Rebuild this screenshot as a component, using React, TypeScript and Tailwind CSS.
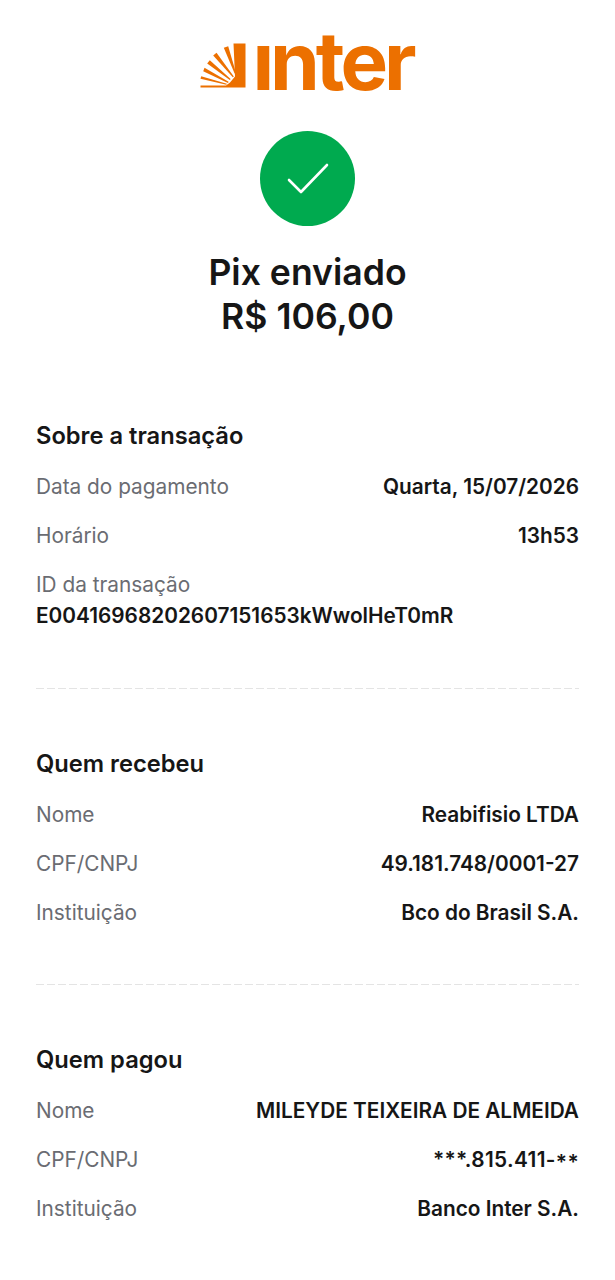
const Row = ({ k, v }: { k: string; v: React.ReactNode }) => (
  <div className="flex h-[49px] items-center justify-between">
    <span className="text-[20.8px] text-[#6a6c72]">{k}</span>
    <span className="text-[20.8px] leading-[28px] font-semibold text-[#161616]">{v}</span>
  </div>
);

const Section = ({ title, children }: { title: string; children: React.ReactNode }) => (
  <section>
    <h2 className="mb-[11px] h-[30px] text-[23.7px] leading-[30px] font-semibold text-[#161616]">{title}</h2>
    {children}
  </section>
);

const Divider = () => (
  <div className="h-px bg-[repeating-linear-gradient(90deg,#e4e4e4_0_8px,transparent_8px_11px)]" />
);

export default function App() {
  return (
    <div className="h-[1280px] w-[615px] overflow-hidden bg-white px-9 font-['Inter',sans-serif]">
      <header className="flex h-[131px] items-start justify-center pt-[34px]">
        <div className="flex items-end gap-[6px]">
          <svg width="46" height="45" viewBox="0 0 46 45" fill="#ec7000">
            <path d="M33.5 0.5H45.5V44.5H0.5V42.6L26 42.6L30 39.5L35 33.5Z" />
            <path d="M23.8 4.8L28.2 3.2L36 30L34.6 30.6Z" />
            <path d="M13.2 12.5L16.5 9.8L33.8 33.4L32.8 34.2Z" />
            <path d="M7.2 20.5L9.8 17.2L30.6 36L29.8 37Z" />
            <path d="M3.2 28.2L4.5 24.8L28.6 38.8L28 40Z" />
            <path d="M0.5 35.8L1.2 33.2L26.8 40.8L26.4 41.8Z" />
          </svg>
          <span className="h-[54px] pr-[2px] text-[80px] leading-[54px] font-bold tracking-[-4px] text-[#ec7000]">ınter</span>
        </div>
      </header>
      <div className="flex justify-center">
        <div className="flex h-[95px] w-[95px] items-center justify-center rounded-full bg-[#00aa4f]">
          <svg width="42" height="32" viewBox="0 0 42 32" fill="none" stroke="#fff" strokeWidth="2.6" strokeLinecap="round" strokeLinejoin="round">
            <path d="M2 17L14 29L40 2" />
          </svg>
        </div>
      </div>
      <div className="mt-[25px] text-center text-[35.6px] leading-[44px] font-semibold text-[#161616]">
        <div>Pix enviado</div>
        <div>R$ 106,00</div>
      </div>
      <div className="mt-[82px]">
        <Section title="Sobre a transação">
          <Row k="Data do pagamento" v="Quarta, 15/07/2026" />
          <Row k="Horário" v="13h53" />
          <div className="flex h-[49px] items-center text-[20.8px] text-[#6a6c72]">ID da transação</div>
          <div className="-mt-[7px] text-[20.8px] leading-[28px] font-semibold text-[#161616]">E00416968202607151653kWwolHeT0mR</div>
        </Section>
      </div>
      <div className="mt-[58px]"><Divider /></div>
      <div className="mt-[60px]">
        <Section title="Quem recebeu">
          <Row k="Nome" v="Reabifisio LTDA" />
          <Row k="CPF/CNPJ" v="49.181.748/0001-27" />
          <Row k="Instituição" v="Bco do Brasil S.A." />
        </Section>
      </div>
      <div className="mt-[47px]"><Divider /></div>
      <div className="mt-[60px]">
        <Section title="Quem pagou">
          <Row k="Nome" v="MILEYDE TEIXEIRA DE ALMEIDA" />
          <Row k="CPF/CNPJ" v={<span className="tracking-[0.35px]">***.815.411-<span className="align-[-3px] leading-[0]">**</span></span>} />
          <Row k="Instituição" v="Banco Inter S.A." />
        </Section>
      </div>
    </div>
  );
}
